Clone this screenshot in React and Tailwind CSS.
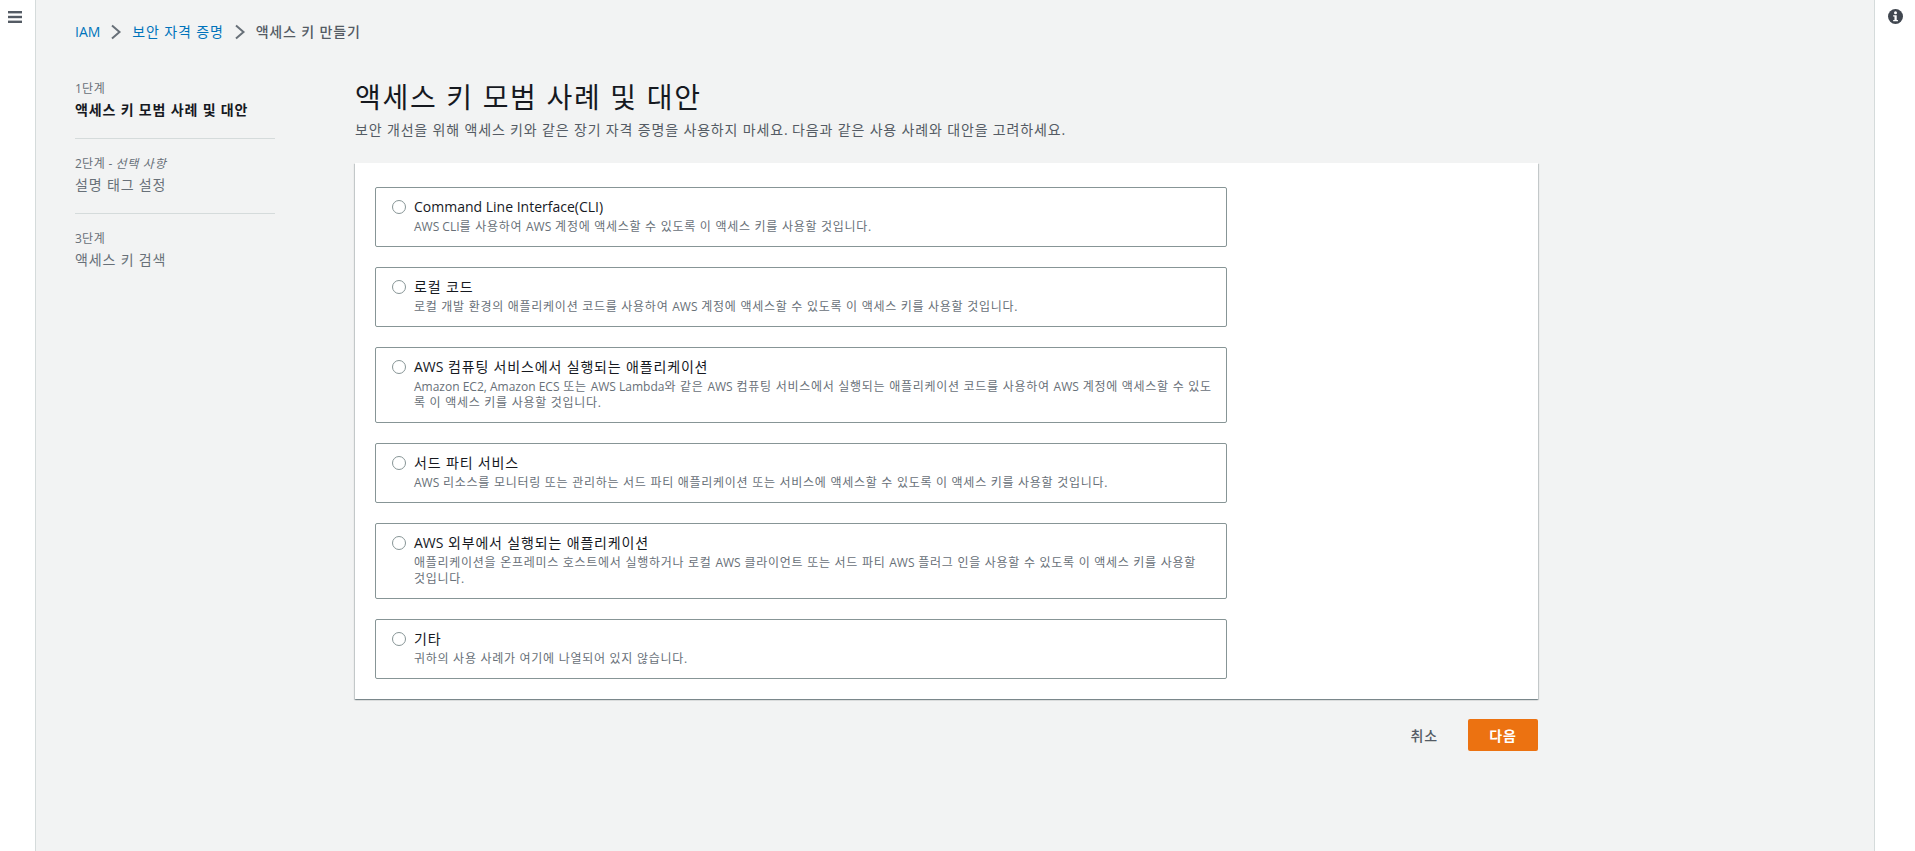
const FONT = "font-['Open_Sans','Noto_Sans_CJK_KR',sans-serif]";

const OPTIONS = [
  ["Command Line Interface(CLI)", "AWS CLI를 사용하여 AWS 계정에 액세스할 수 있도록 이 액세스 키를 사용할 것입니다."],
  ["로컬 코드", "로컬 개발 환경의 애플리케이션 코드를 사용하여 AWS 계정에 액세스할 수 있도록 이 액세스 키를 사용할 것입니다."],
  ["AWS 컴퓨팅 서비스에서 실행되는 애플리케이션", "Amazon EC2, Amazon ECS 또는 AWS Lambda와 같은 AWS 컴퓨팅 서비스에서 실행되는 애플리케이션 코드를 사용하여 AWS 계정에 액세스할 수 있도록 이 액세스 키를 사용할 것입니다."],
  ["서드 파티 서비스", "AWS 리소스를 모니터링 또는 관리하는 서드 파티 애플리케이션 또는 서비스에 액세스할 수 있도록 이 액세스 키를 사용할 것입니다."],
  ["AWS 외부에서 실행되는 애플리케이션", "애플리케이션을 온프레미스 호스트에서 실행하거나 로컬 AWS 클라이언트 또는 서드 파티 AWS 플러그 인을 사용할 수 있도록 이 액세스 키를 사용할 \u2060것\u2060입\u2060니\u2060다."],
  ["기타", "귀하의 사용 사례가 여기에 나열되어 있지 않습니다."],
];

// Hangul runs are set a little wider than the installed CJK face; Latin runs keep their own metrics.
function T({ children }) {
  return children.split(/([A-Za-z0-9(),.]+(?: [A-Za-z0-9(),.]+)*)/).map((part, i) =>
    i % 2 === 1 ? <span key={i}>{part}</span> : <span key={i} className="tracking-[0.06em]">{part}</span>
  );
}

function Chevron() {
  return (
    <svg width="12" height="16" viewBox="0 0 12 16" fill="none" className="mx-[10px] shrink-0">
      <path d="M2 1.5 L9.5 8 L2 14.5" stroke="#687078" strokeWidth="2" />
    </svg>
  );
}

function Step({ label, optional, name, active, last }) {
  return (
    <div className={last ? "" : "border-b border-[#d5dbdb] pb-[18px] mb-[16px]"}>
      <div className="pt-[1px] text-[12px] leading-[16px] text-[#687078]">
        <T>{label}</T>
        {optional && <> - <i><T>선택 사항</T></i></>}
      </div>
      <div className={`mt-[3px] text-[14px] leading-[20px] ${active ? "font-bold text-[#16191f]" : "text-[#687078]"}`}><T>{name}</T></div>
    </div>
  );
}

function Option({ title, desc }) {
  return (
    <div className="flex w-[852px] rounded-[2px] border border-[#879596] pl-[16px] pr-[14px] pt-[9px] pb-[11px]">
      <div className="mt-[3px] mr-[8px] h-[14px] w-[14px] shrink-0 rounded-full border border-[#879596] bg-white" />
      <div>
        <div className="text-[14px] leading-[20px] text-[#16191f]"><T>{title}</T></div>
        <div className="mt-[2px] text-[12px] leading-[16px] text-[#687078]"><T>{desc}</T></div>
      </div>
    </div>
  );
}

export default function App() {
  return (
    <div className={`flex h-[851px] w-[1915px] overflow-hidden bg-white ${FONT}`}>
      <aside className="w-[36px] shrink-0 border-r border-[#d5dbdb] pl-[8px] pt-[11px] shadow-[1px_0_1px_rgba(0,28,36,0.1)]">
        <svg width="14" height="12" viewBox="0 0 14 12">
          <rect x="0" y="0" width="14" height="2.4" fill="#545b64" />
          <rect x="0" y="4.8" width="14" height="2.4" fill="#545b64" />
          <rect x="0" y="9.6" width="14" height="2.4" fill="#545b64" />
        </svg>
      </aside>

      <main className="flex-1 bg-[#f2f3f3] pl-[39px]">
        <nav className="flex h-[20px] mt-[22px] items-center text-[14px] leading-[20px]">
          <span className="text-[#0073bb]">IAM</span>
          <Chevron />
          <span className="text-[#0073bb]"><T>보안 자격 증명</T></span>
          <Chevron />
          <span className="font-medium text-[#545b64]"><T>액세스 키 만들기</T></span>
        </nav>

        <div className="mt-[38px] flex">
          <div className="w-[200px] shrink-0">
            <Step label="1단계" name="액세스 키 모범 사례 및 대안" active />
            <Step label="2단계" optional name="설명 태그 설정" />
            <Step label="3단계" name="액세스 키 검색" last />
          </div>

          <div className="ml-[80px] w-[1183px]">
            <h1 className="text-[28px] leading-[34px] text-[#16191f]"><T>액세스 키 모범 사례 및 대안</T></h1>
            <p className="mt-[6px] text-[14px] leading-[20px] text-[#545b64]">
              <T>보안 개선을 위해 액세스 키와 같은 장기 자격 증명을 사용하지 마세요. 다음과 같은 사용 사례와 대안을 고려하세요.</T>
            </p>

            <section className="mt-[23px] flex flex-col gap-[20px] bg-white pl-[20px] pt-[24px] pb-[20px] shadow-[0_1px_1px_0_rgba(0,28,36,0.3),1px_1px_1px_0_rgba(0,28,36,0.15),-1px_1px_1px_0_rgba(0,28,36,0.15)]">
              {OPTIONS.map(([t, d]) => <Option key={t} title={t} desc={d} />)}
            </section>

            <div className="mt-[20px] flex items-center justify-end">
              <button className="mr-[30px] text-[14px] font-medium text-[#545b64]"><T>취소</T></button>
              <button className="h-[32px] w-[70px] rounded-[2px] bg-[#ec7211] text-[14px] font-bold text-white"><T>다음</T></button>
            </div>
          </div>
        </div>
      </main>

      <aside className="w-[41px] shrink-0 border-l border-[#d5dbdb] pl-[13px] pt-[9px]">
        <svg width="15" height="15" viewBox="0 0 16 16">
          <circle cx="8" cy="8" r="8" fill="#414750" />
          <circle cx="8" cy="4" r="1.6" fill="#fff" />
          <path d="M5.5 6.6 H9.3 V11.6 H10.6 V13 H5.5 V11.6 H6.9 V8 H5.5 Z" fill="#fff" />
        </svg>
      </aside>
    </div>
  );
}
